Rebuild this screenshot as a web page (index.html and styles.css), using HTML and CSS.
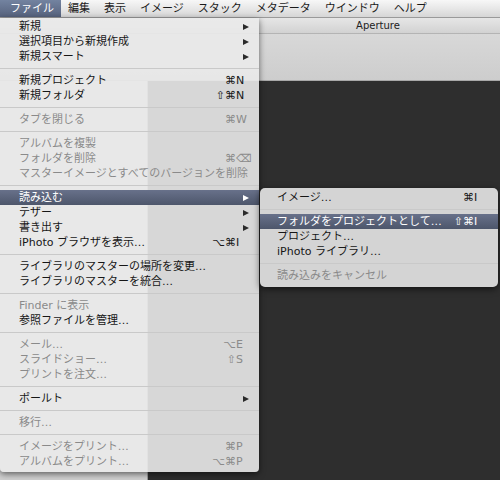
FILE: index.html
```html
<!DOCTYPE html>
<html lang="ja">
<head>
<meta charset="utf-8">
<title>Aperture</title>
<link rel="stylesheet" href="styles.css">
</head>
<body>
<div class="screen">
  <div class="menubar">
    <span class="mb-item active">ファイル</span>
    <span class="mb-item">編集</span>
    <span class="mb-item">表示</span>
    <span class="mb-item">イメージ</span>
    <span class="mb-item">スタック</span>
    <span class="mb-item">メタデータ</span>
    <span class="mb-item">ウインドウ</span>
    <span class="mb-item">ヘルプ</span>
  </div>
  <div class="window">
    <div class="titlebar"><span class="title">Aperture</span></div>
    <div class="toolbar"></div>
    <div class="content">
      <div class="sidebar"></div>
      <div class="viewer"></div>
    </div>
  </div>

  <div class="menu main-menu">
    <div class="item"><span class="label">新規</span><span class="arrow"></span></div>
    <div class="item"><span class="label">選択項目から新規作成</span><span class="arrow"></span></div>
    <div class="item"><span class="label">新規スマート</span><span class="arrow"></span></div>
    <div class="sep"></div>
    <div class="item"><span class="label">新規プロジェクト</span><span class="mods">⌘</span><span class="key">N</span></div>
    <div class="item"><span class="label">新規フォルダ</span><span class="mods">⇧⌘</span><span class="key">N</span></div>
    <div class="sep"></div>
    <div class="item disabled"><span class="label">タブを閉じる</span><span class="mods">⌘</span><span class="key">W</span></div>
    <div class="sep"></div>
    <div class="item disabled"><span class="label">アルバムを複製</span></div>
    <div class="item disabled"><span class="label">フォルダを削除</span><span class="mods">⌘</span><span class="key">⌫</span></div>
    <div class="item disabled"><span class="label">マスターイメージとすべてのバージョンを削除</span></div>
    <div class="sep"></div>
    <div class="item selected"><span class="label">読み込む</span><span class="arrow"></span></div>
    <div class="item"><span class="label">テザー</span><span class="arrow"></span></div>
    <div class="item"><span class="label">書き出す</span><span class="arrow"></span></div>
    <div class="item"><span class="label">iPhoto ブラウザを表示…</span><span class="mods">⌥⌘</span><span class="key">I</span></div>
    <div class="sep"></div>
    <div class="item"><span class="label">ライブラリのマスターの場所を変更…</span></div>
    <div class="item"><span class="label">ライブラリのマスターを統合…</span></div>
    <div class="sep"></div>
    <div class="item disabled"><span class="label">Finder に表示</span></div>
    <div class="item"><span class="label">参照ファイルを管理…</span></div>
    <div class="sep"></div>
    <div class="item disabled"><span class="label">メール…</span><span class="mods">⌥</span><span class="key">E</span></div>
    <div class="item disabled"><span class="label">スライドショー…</span><span class="mods">⇧</span><span class="key">S</span></div>
    <div class="item disabled"><span class="label">プリントを注文…</span></div>
    <div class="sep"></div>
    <div class="item"><span class="label">ポールト</span><span class="arrow"></span></div>
    <div class="sep"></div>
    <div class="item disabled"><span class="label">移行…</span></div>
    <div class="sep"></div>
    <div class="item disabled"><span class="label">イメージをプリント…</span><span class="mods">⌘</span><span class="key">P</span></div>
    <div class="item disabled"><span class="label">アルバムをプリント…</span><span class="mods">⌥⌘</span><span class="key">P</span></div>
  </div>

  <div class="menu sub-menu">
    <div class="item"><span class="label">イメージ…</span><span class="mods">⌘</span><span class="key">I</span></div>
    <div class="sep"></div>
    <div class="item selected"><span class="label">フォルダをプロジェクトとして…</span><span class="mods">⇧⌘</span><span class="key">I</span></div>
    <div class="item"><span class="label">プロジェクト…</span></div>
    <div class="item"><span class="label">iPhoto ライブラリ…</span></div>
    <div class="sep"></div>
    <div class="item disabled"><span class="label">読み込みをキャンセル</span></div>
  </div>
</div>
</body>
</html>
```
FILE: styles.css
```css
html, body {
  margin: 0;
  padding: 0;
  background: #2e2e2e;
}
.screen {
  position: relative;
  width: 500px;
  height: 480px;
  overflow: hidden;
  font-family: "DejaVu Sans", "Noto Sans CJK JP", sans-serif;
  background: #2e2e2e;
}

/* menu bar */
.menubar {
  height: 18px;
  display: flex;
  align-items: stretch;
  background: linear-gradient(#f7f7f7, #e4e4e4 60%, #d6d6d6);
  border-bottom: 1px solid #9a9a9a;
  box-sizing: border-box;
  font-size: 11px;
  color: #1a1a1a;
}
.mb-item {
  display: flex;
  align-items: center;
  padding: 0 7px;
  line-height: 17px;
}
.mb-item.active {
  padding-left: 10px;
  background: linear-gradient(#7383a0, #56627d);
  color: #fff;
}

/* window behind */
.window {
  display: flex;
  flex-direction: column;
  height: 462px;
}
.titlebar {
  height: 15px;
  background: linear-gradient(#e6e6e6, #d2d2d2);
  border-bottom: 1px solid #b4b4b4;
  display: flex;
  align-items: center;
  justify-content: center;
  padding-left: 256px;
}
.title {
  font-family: "DejaVu Sans", sans-serif;
  font-size: 10px;
  color: #222;
}
.toolbar {
  height: 46px;
  background: linear-gradient(#d8d8d8, #cdcdcd);
  border-bottom: 1px solid #a8a8a8;
}
.content {
  flex: 1;
  display: flex;
}
.sidebar {
  width: 147px;
  background: #cfcfcf;
  border-right: 1px solid #9a9a9a;
}
.viewer {
  flex: 1;
  background: #2e2e2e;
}

/* menus */
.menu {
  position: absolute;
  font-size: 11px;
  color: #161616;
  box-sizing: border-box;
}
.main-menu {
  left: 0;
  top: 18px;
  width: 259px;
  padding: 1px 0 3px;
  background: rgba(234, 234, 234, 0.9);
  border-radius: 0 0 4px 4px;
  box-shadow: 0 2px 6px rgba(0, 0, 0, 0.55);
}
.sub-menu {
  left: 260px;
  top: 188px;
  width: 238px;
  padding: 2px 0 4px;
  background: rgba(220, 220, 220, 0.96);
  border-radius: 5px;
  box-shadow: 0 2px 7px rgba(0, 0, 0, 0.6);
}
.item {
  display: flex;
  align-items: center;
  height: 15px;
  line-height: 15px;
  padding: 0 10px 0 19px;
  white-space: nowrap;
}
.sub-menu .item {
  padding: 0 11px 0 17px;
}
.label {
  flex: 1;
}
.mods {
  text-align: right;
}
.key {
  width: 13px;
  text-align: left;
}
.arrow {
  width: 0;
  height: 0;
  border-left: 6px solid #2a2a2a;
  border-top: 3.5px solid transparent;
  border-bottom: 3.5px solid transparent;
}
.item.disabled {
  color: #8a8a8a;
}
.item.selected {
  background: linear-gradient(#68718a, #4d566b);
  color: #fff;
}
.item.selected .arrow {
  border-left-color: #fff;
}
.sep {
  height: 9px;
  position: relative;
}
.sep::after {
  content: "";
  position: absolute;
  left: 0;
  right: 0;
  top: 4px;
  height: 1px;
  background: #c9c9c9;
}
```
